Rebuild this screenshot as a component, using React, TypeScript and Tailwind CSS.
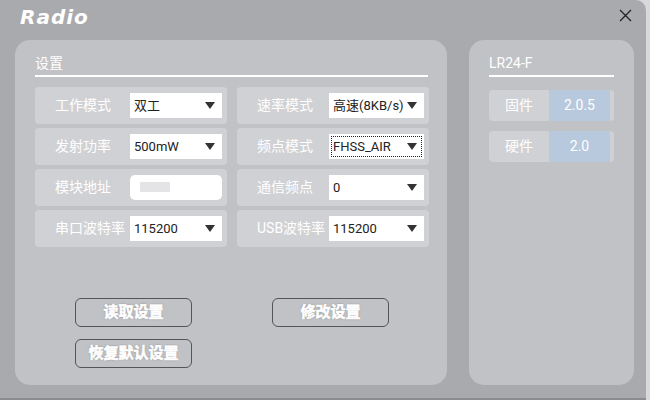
const cjk = { fontFamily: 'Roboto, "Noto Sans CJK SC", sans-serif' }

function Arrow() {
  return (
    <svg width="10" height="7" viewBox="0 0 10 7" className="shrink-0">
      <path d="M0 0 L10 0 L5 7 Z" fill="#333" />
    </svg>
  )
}

function SelectBox({ value, focus, width }: { value: string; focus?: boolean; width: string }) {
  return (
    <div className={`${width} h-[25px] bg-white flex items-center justify-between pl-[4px] pr-[7px] text-[13px] text-[#222] whitespace-nowrap ${focus ? 'outline outline-1 outline-dotted outline-[#222] -outline-offset-[3px]' : ''}`}>
      <span className="leading-none">{value}</span>
      <Arrow />
    </div>
  )
}

function Row({ label, children }: { label: string; children: React.ReactNode }) {
  return (
    <div className="h-[37px] bg-[#d0d1d4] rounded-[4px] flex items-center pl-[20px] pr-[5px]">
      <span className="text-white text-[14px] flex-1 whitespace-nowrap leading-none">{label}</span>
      {children}
    </div>
  )
}

function Btn({ text }: { text: string }) {
  return (
    <div
      className="w-[117px] h-[29px] rounded-[6px] border-[1.5px] border-[#555] flex items-center justify-center text-white font-bold text-[15px] [-webkit-text-stroke:0.6px_white]"
      style={{ textShadow: '0 0 2px rgba(0,0,0,0.4)' }}
    >
      {text}
    </div>
  )
}

function InfoRow({ label, value }: { label: string; value: string }) {
  return (
    <div className="h-[31px] flex rounded-[4px] overflow-hidden bg-[#d0d1d4]">
      <div className="w-[60px] flex items-center justify-center text-white text-[14px]">{label}</div>
      <div className="w-[61px] bg-[#b8c8dd] flex items-center justify-center text-white text-[14px]">{value}</div>
    </div>
  )
}

export default function App() {
  return (
    <div className="w-[650px] h-[400px] bg-[#d9d9db] overflow-hidden" style={cjk}>
      <div className="w-[646px] h-[398px] bg-[#a9aaad] rounded-tr-[10px] flex flex-col border-b-2 border-[#8c8c8e] box-content">
        {/* title bar */}
        <div className="h-[40px] flex items-start justify-between pl-[20px] pr-[14px] pt-[2px]">
          <span
            className="text-white text-[20px] font-bold italic tracking-[1px]"
            style={{ fontFamily: '"DejaVu Sans", sans-serif' }}
          >
            Radio
          </span>
          <svg width="13" height="13" viewBox="0 0 13 13" className="mt-[7px]">
            <path d="M1 1 L12 12 M12 1 L1 12" stroke="#222" strokeWidth="1.3" />
          </svg>
        </div>

        <div className="flex gap-[22px] pl-[15px]">
          {/* settings panel */}
          <div className="w-[432px] h-[345px] bg-[#c1c2c6] rounded-[15px] pl-[20px] pr-[18px] pt-[13px]">
            <div className="text-white text-[14px] leading-[20px]">设置</div>
            <div className="h-[1.5px] bg-white mt-[2px] w-[393px]" />
            <div className="grid grid-cols-2 gap-x-[10px] gap-y-[4px] mt-[10px]">
              <Row label="工作模式"><SelectBox value="双工" width="w-[92px]" /></Row>
              <Row label="速率模式"><SelectBox value="高速(8KB/s)" width="w-[95px]" /></Row>
              <Row label="发射功率"><SelectBox value="500mW" width="w-[92px]" /></Row>
              <Row label="频点模式"><SelectBox value="FHSS_AIR" focus width="w-[95px]" /></Row>
              <Row label="模块地址">
                <div className="w-[92px] h-[25px] bg-white rounded-[5px] flex items-center pl-[10px]">
                  <div className="w-[30px] h-[10px] bg-[#e4e4e6] rounded-[1px]" />
                </div>
              </Row>
              <Row label="通信频点"><SelectBox value="0" width="w-[95px]" /></Row>
              <Row label="串口波特率"><SelectBox value="115200" width="w-[92px]" /></Row>
              <Row label="USB波特率"><SelectBox value="115200" width="w-[95px]" /></Row>
            </div>
            <div className="flex mt-[51px]">
              <div className="flex flex-col gap-[12px] ml-[40px]">
                <Btn text="读取设置" />
                <Btn text="恢复默认设置" />
              </div>
              <div className="ml-[80px]">
                <Btn text="修改设置" />
              </div>
            </div>
          </div>

          {/* device panel */}
          <div className="w-[165px] h-[345px] bg-[#c1c2c6] rounded-[15px] pl-[20px] pt-[13px]">
            <div className="text-white text-[14px] leading-[20px]">LR24-F</div>
            <div className="h-[1.5px] bg-white mt-[2px] w-[125px]" />
            <div className="flex flex-col gap-[10px] mt-[13px] w-[125px]">
              <InfoRow label="固件" value="2.0.5" />
              <InfoRow label="硬件" value="2.0" />
            </div>
          </div>
        </div>
      </div>
    </div>
  )
}
